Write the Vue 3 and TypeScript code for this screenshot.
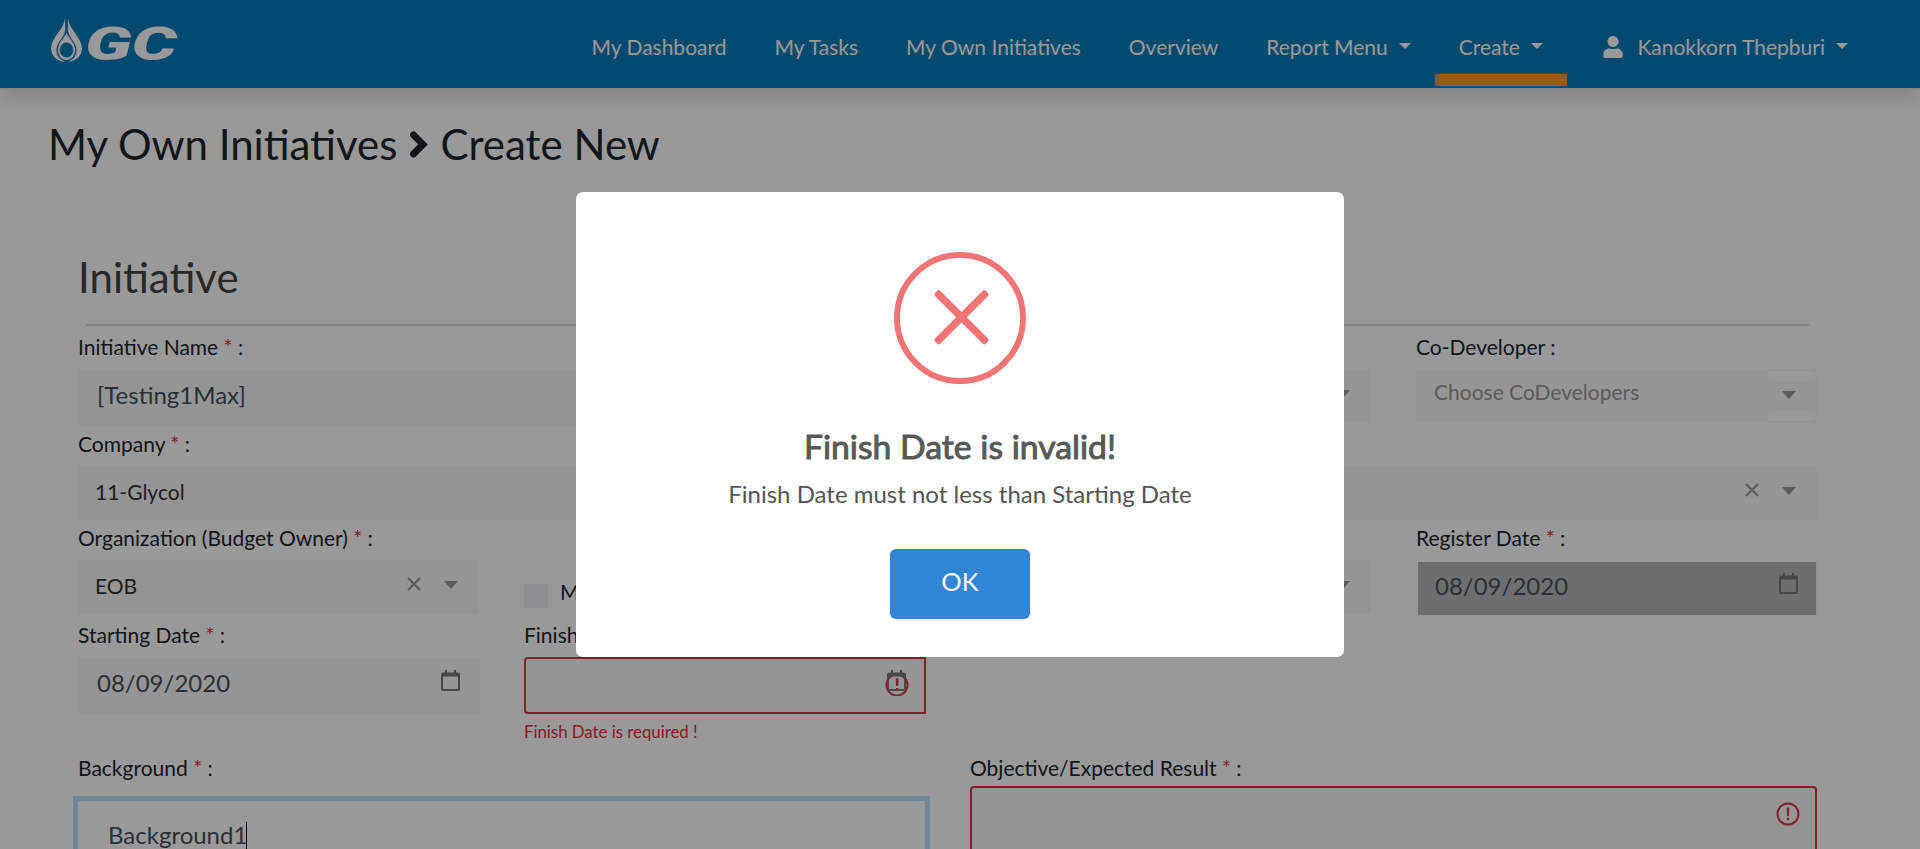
<script setup lang="ts">
import { ref } from 'vue'

interface NavItem {
  label: string
  menu?: boolean
  active?: boolean
  user?: boolean
}

const navItems: NavItem[] = [
  { label: 'My Dashboard' },
  { label: 'My Tasks' },
  { label: 'My Own Initiatives' },
  { label: 'Overview' },
  { label: 'Report Menu', menu: true },
  { label: 'Create', menu: true, active: true },
  { label: 'Kanokkorn Thepburi', menu: true, user: true },
]

const initiativeName = ref('[Testing1Max]')
const company = ref('11-Glycol')
const organization = ref('EOB')
const startingDate = ref('08/09/2020')
const registerDate = ref('08/09/2020')
const background = ref('Background1')
const alertOpen = ref(true)
</script>

<template>
  <div class="page">
    <header class="topbar">
      <svg class="logo" viewBox="0 0 150 56" aria-label="GC">
        <g fill="#fff">
          <path d="M15 1 C14 13 2 19 1 31 C1 39 7 44 15 45 C9 42 6 38 6.500 32 C7 25 15 20 15.300 12 Z" />
          <path d="M18 1 C19 13 31 19 32 31 C32 39 26 44 18 45 C24 42 27 38 26.500 32 C26 25 18 20 17.700 12 Z" />
        </g>
        <path d="M16.500 16 C14 22 8 25 8 33 C8 39 12 43 16.500 43 C21 43 25 39 25 33 C25 25 19 22 16.500 16 Z" fill="#fff" />
        <ellipse cx="16.500" cy="33" rx="6.800" ry="7.600" fill="#007bb9" />
        <text class="logo-text" x="35" y="43" textLength="92" lengthAdjust="spacingAndGlyphs">GC</text>
      </svg>
      <nav class="nav">
        <a v-for="item in navItems" :key="item.label" class="nav-item" :class="{ active: item.active, user: item.user }">
          <svg v-if="item.user" class="user-icon" viewBox="0 0 448 512">
            <path fill="#fff" d="M224 256c70.700 0 128-57.300 128-128S294.700 0 224 0 96 57.300 96 128s57.300 128 128 128zm89.600 32h-16.700c-22.200 10.200-46.900 16-72.900 16s-50.600-5.800-72.900-16h-16.700C60.200 288 0 348.200 0 422.400V464c0 26.500 21.500 48 48 48h352c26.500 0 48-21.500 48-48v-41.600c0-74.200-60.200-134.400-134.400-134.400z" />
          </svg>
          <span>{{ item.label }}</span>
          <i v-if="item.menu" class="nav-caret"></i>
        </a>
      </nav>
    </header>

    <h1 class="title">
      <span>My Own Initiatives</span>
      <svg class="chevron" viewBox="0 0 18 27">
        <path d="M3.500 3.800L13 13.400L3.500 23" fill="none" stroke="#212529" stroke-width="6.800" stroke-linecap="round" />
      </svg>
      <span>Create New</span>
    </h1>

    <main class="card">
      <h2 class="section">Initiative</h2>
      <hr class="rule" />

      <div class="form">
        <div class="field c1 span3 r1">
          <label>Initiative Name <b>*</b> :</label>
          <div class="input narrow">{{ initiativeName }}</div>
        </div>
        <div class="field c3 r1">
          <label></label>
          <div class="select"><span></span><i class="caret"></i></div>
        </div>
        <div class="field c4 r1">
          <label>Co-Developer :</label>
          <div class="select multi">
            <span class="placeholder">Choose CoDevelopers</span>
            <div class="indicator"><i class="caret"></i></div>
          </div>
        </div>

        <div class="field full r2">
          <label>Company <b>*</b> :</label>
          <div class="select">
            <span>{{ company }}</span>
            <svg class="clear" viewBox="0 0 14 14"><path d="M1 1L13 13M13 1L1 13" stroke="#999" stroke-width="2" /></svg>
            <i class="caret"></i>
          </div>
        </div>

        <div class="field c1 r3">
          <label>Organization (Budget Owner) <b>*</b> :</label>
          <div class="select">
            <span>{{ organization }}</span>
            <svg class="clear" viewBox="0 0 14 14"><path d="M1 1L13 13M13 1L1 13" stroke="#999" stroke-width="2" /></svg>
            <i class="caret"></i>
          </div>
        </div>
        <div class="check c2 r3"><i class="box"></i><span>M</span></div>
        <div class="field c3 r3">
          <label></label>
          <div class="select"><span></span><i class="caret"></i></div>
        </div>
        <div class="field c4 r3">
          <label>Register Date <b>*</b> :</label>
          <div class="input disabled">
            <span>{{ registerDate }}</span>
            <svg class="calendar" viewBox="0 0 19 21"><path d="M4 0h2v2.500h7V0h2v2.500h2q2 0 2 2V19q0 2-2 2H2q-2 0-2-2V4.500q0-2 2-2h2zM2 6.500V19h15V6.500z" fill="#777" fill-rule="evenodd" /></svg>
          </div>
        </div>

        <div class="field c1 r4">
          <label>Starting Date <b>*</b> :</label>
          <div class="input date">
            <span>{{ startingDate }}</span>
            <svg class="calendar" viewBox="0 0 19 21"><path d="M4 0h2v2.500h7V0h2v2.500h2q2 0 2 2V19q0 2-2 2H2q-2 0-2-2V4.500q0-2 2-2h2zM2 6.500V19h15V6.500z" fill="#777" fill-rule="evenodd" /></svg>
          </div>
        </div>
        <div class="field c2 r4">
          <label>Finish Date <b>*</b> :</label>
          <div class="input date invalid">
            <svg class="alert-calendar" viewBox="0 0 24 26">
              <circle cx="12" cy="15" r="10.500" fill="none" stroke="#dc3545" stroke-width="2" />
              <path d="M6 0h2v2.500h7V0h2v2.500h2q2 0 2 2V19q0 2-2 2H4q-2 0-2-2V4.500q0-2 2-2h2zM4 6.500V19h15V6.500z" fill="#777" fill-rule="evenodd" />
              <path d="M10.700 8.500h3l-.5 7.500h-2zM11 18h2.400v2.400h-2.400z" fill="#dc3545" />
            </svg>
          </div>
          <p class="error">Finish Date is required !</p>
        </div>

        <div class="field half-left r5">
          <label>Background <b>*</b> :</label>
          <div class="textarea focused">{{ background }}<i class="cursor"></i></div>
        </div>
        <div class="field half-right r5">
          <label>Objective/Expected Result <b>*</b> :</label>
          <div class="textarea invalid">
            <svg class="warn" viewBox="0 0 24 24">
              <circle cx="12" cy="12" r="10.500" fill="none" stroke="#dc3545" stroke-width="2" />
              <path d="M10.700 5.500h2.600l-.4 8.500h-1.800zM10.800 15.800h2.400v2.400h-2.400z" fill="#dc3545" />
            </svg>
          </div>
        </div>
      </div>
    </main>

    <div v-if="alertOpen" class="overlay">
      <section class="dialog" role="alertdialog">
        <svg class="dialog-icon" viewBox="0 0 132 132">
          <circle cx="66" cy="66" r="63" fill="none" stroke="#f27474" stroke-width="6" />
          <g fill="#f27474">
            <rect x="31.500" y="61.500" width="72" height="7.500" rx="2.500" transform="rotate(45 67.500 65.250)" />
            <rect x="31.500" y="61.500" width="72" height="7.500" rx="2.500" transform="rotate(-45 67.500 65.250)" />
          </g>
        </svg>
        <h3>Finish Date is invalid!</h3>
        <p>Finish Date must not less than Starting Date</p>
        <button type="button" @click="alertOpen = false">OK</button>
      </section>
    </div>
  </div>
</template>

<style>
body { margin: 0; overflow: hidden; background: #fff; }
</style>

<style scoped>
* { box-sizing: border-box; }
.page {
  position: relative;
  width: 100%;
  height: 849px;
  overflow: hidden;
  background: #fff;
  color: #212529;
  font-family: Lato, "Liberation Sans", sans-serif;
  font-size: 21px;
}
.topbar {
  display: flex;
  justify-content: space-between;
  height: 90px;
  padding: 0 48px 0 50px;
  background: #007bb9;
  border-bottom: 2px solid #dee2e6;
  box-shadow: 0 8px 20px rgba(0, 0, 0, .15);
}
.logo { width: 150px; height: 56px; margin-top: 17px; }
.logo-text { font: italic 900 46px Roboto, "Liberation Sans", sans-serif; fill: #fff; }
.nav { display: flex; height: 88px; }
.nav-item {
  display: flex;
  align-items: center;
  height: 86px;
  padding: 7px 24px 0;
  color: #fff;
  white-space: nowrap;
}
.nav-item.active { border-bottom: 12px solid #fb941e; padding-top: 19px; }
.nav-item.user { padding-left: 36px; }
.user-icon { width: 20px; height: 22px; margin: 0 14.500px 0 0; }
.nav-caret {
  margin: -2px 0 0 11px;
  border: 6.500px solid transparent;
  border-top-color: #fff;
  border-bottom: 0;
}
.title {
  display: flex;
  align-items: center;
  height: 50px;
  margin: 29px 0 0 48px;
  padding: 0;
  font-size: 42px;
  line-height: 50px;
  font-weight: 400;
  white-space: nowrap;
}
.chevron { width: 18px; height: 27px; margin: 0 12px 0 13px; }
.card { margin: 83px 0 0 78px; width: 1740px; }
.section { height: 50px; margin: 0; font-size: 42px; line-height: 50px; font-weight: 400; color: #444; }
.rule { height: 2px; margin: 22px 9px 5px 8px; border: 0; background: #dedede; }
.form {
  display: grid;
  grid-template-columns: repeat(4, 401px);
  grid-template-rows: 97px 94px 97px 133px 97px;
  column-gap: 45px;
}
.c1 { grid-column: 1; }
.c2 { grid-column: 2; }
.c3 { grid-column: 3; }
.c4 { grid-column: 4; }
.span3 { grid-column: 1 / 3; }
.full { grid-column: 1 / 5; }
.half-left { grid-column: 1 / 3; }
.half-right { grid-column: 3 / 5; }
.r1 { grid-row: 1; }
.r2 { grid-row: 2; }
.r3 { grid-row: 3; }
.r4 { grid-row: 4; }
.r5 { grid-row: 5; }
.field label { display: block; height: 32px; margin-bottom: 6px; line-height: 32px; white-space: pre; }
.field label b { color: #dc3545; font-weight: 400; }
.input, .select {
  display: flex;
  align-items: center;
  border-radius: 4px;
  background: #f8f8f8;
}
.input { height: 57px; padding: 0 20px 6px 19px; font-size: 24px; color: #495057; }
.date { width: 402px; border-radius: 4px 0 0 4px; }
.date span, .disabled span { flex: 1; }
.calendar { width: 19px; height: 21px; margin-bottom: 5px; }
.disabled {
  width: 402px;
  height: 57px;
  padding: 0 18px 6px 17px;
  border: 2px solid #fcfcfc;
  background: #b8b8b8;
  border-radius: 2px;
}
.input.invalid {
  justify-content: flex-end;
  padding: 0 15px 0 0;
  border: 2px solid #dc3545;
}
.alert-calendar { width: 24px; height: 26px; margin-bottom: 6px; }
.select { height: 54px; padding: 0 21px 4px 17px; color: #333; }
.select span { flex: 1; }
.clear { width: 14px; height: 14px; margin: 0 23px 3px 0; }
.caret {
  border: 7.500px solid transparent;
  border-top: 8px solid #999;
  border-bottom: 0;
}
.multi { padding: 0 2px; border: 2px solid #f8f8f8; background: #f8f8f8; }
.select.multi .placeholder { padding: 0 0 9px 14px; color: #999; }
.indicator {
  display: flex;
  align-items: center;
  justify-content: center;
  width: 46px;
  height: 50px;
  margin-right: -2px;
  padding: 0 6px 2px 0;
  border-top: 10px solid #fff;
  border-bottom: 10px solid #fff;
  border-radius: 0 4px 4px 0;
  background: #f8f8f8;
}
.check { display: flex; align-items: flex-start; padding-top: 62px; }
.box { width: 24px; height: 24px; margin-right: 12px; background: #e9ecef; }
.check span { margin-top: -5px; }
.error { margin: 5px 0 0; font-size: 16.800px; line-height: 26px; color: #dc3545; }
.textarea { height: 120px; font-size: 24px; color: #495057; }
.textarea.focused {
  width: 847px;
  margin-top: 17px;
  padding: 19px 30px;
  line-height: 30px;
  box-shadow: 0 0 0 5px #bfdeff;
  background: #fff;
}
.cursor { display: inline-block; width: 1px; height: 28px; margin-left: -1px; background: #000; vertical-align: -6px; }
.textarea.invalid {
  display: flex;
  justify-content: flex-end;
  margin-top: 2px;
  padding: 14px 15px 0;
  border: 2px solid #dc3545;
  border-radius: 4px;
  background: #f8f8f8;
}
.half-left label, .half-right label { margin-bottom: 0; }
.warn { width: 24px; height: 24px; }
.overlay {
  position: absolute;
  inset: 0;
  display: flex;
  align-items: center;
  justify-content: center;
  background: rgba(0, 0, 0, .4);
}
.dialog {
  display: flex;
  flex-direction: column;
  align-items: center;
  width: 768px;
  height: 465px;
  padding-top: 60px;
  border-radius: 7px;
  background: #fff;
  color: #545454;
}
.dialog-icon { width: 132px; height: 132px; }
.dialog h3 {
  margin: 42px 0 0;
  font-size: 33.750px;
  line-height: 40px;
  font-weight: 400;
  color: #595959;
  -webkit-text-stroke: 1px #595959;
}
.dialog p { margin: 13px 0 0; font-size: 24px; line-height: 30px; }
.dialog button {
  width: 140px;
  height: 70px;
  margin-top: 40px;
  padding: 0 0 6px;
  border: 0;
  border-radius: 6px;
  background: #3085d6;
  color: #fff;
  font: 400 25.500px Lato, "Liberation Sans", sans-serif;
}
</style>
